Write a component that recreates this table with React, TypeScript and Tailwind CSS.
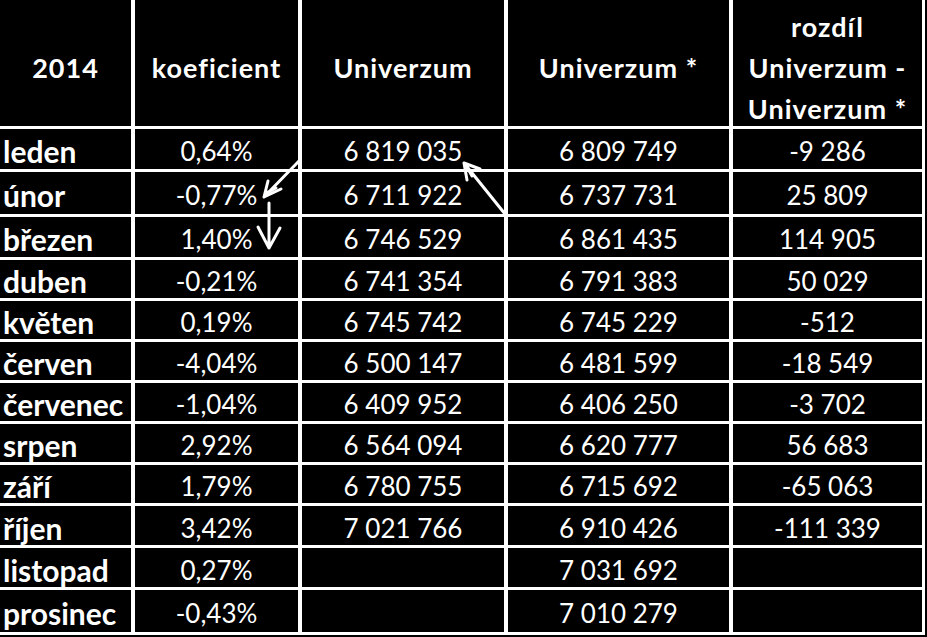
import React from "react"

type Row = [string, string, string, string, string]

const rows: Row[] = [
  ["leden", "0,64%", "6 819 035", "6 809 749", "-9 286"],
  ["únor", "-0,77%", "6 711 922", "6 737 731", "25 809"],
  ["březen", "1,40%", "6 746 529", "6 861 435", "114 905"],
  ["duben", "-0,21%", "6 741 354", "6 791 383", "50 029"],
  ["květen", "0,19%", "6 745 742", "6 745 229", "-512"],
  ["červen", "-4,04%", "6 500 147", "6 481 599", "-18 549"],
  ["červenec", "-1,04%", "6 409 952", "6 406 250", "-3 702"],
  ["srpen", "2,92%", "6 564 094", "6 620 777", "56 683"],
  ["září", "1,79%", "6 780 755", "6 715 692", "-65 063"],
  ["říjen", "3,42%", "7 021 766", "6 910 426", "-111 339"],
  ["listopad", "0,27%", "", "7 031 692", ""],
  ["prosinec", "-0,43%", "", "7 010 279", ""],
]

const cell = "bg-black flex items-center justify-center pt-[4px]"
const head = "bg-black flex items-center justify-center pt-[8px] font-bold text-[27px] tracking-[1px]"

export default function App() {
  return (
    <div
      className="relative w-[927px] h-[637px] bg-black text-white overflow-hidden"
      style={{ fontFamily: "Lato, 'Open Sans', sans-serif", fontVariantLigatures: "none" }}
    >
      <div className="w-[925px] h-[635px] bg-white pr-[3px] pb-[3px] grid grid-cols-[131px_163px_202px_221px_189px] grid-rows-[126px_40px_42px_40px_38px_38px_38px_38px_38px_38px_39px_39px_42px] gap-x-[4px] gap-y-[3px] text-[26px] leading-none">
        {/* header */}
        <div className={head}>2014</div>
        <div className={head}>koeficient</div>
        <div className={head}>Univerzum</div>
        <div className={head}>Univerzum *</div>
        <div className={`${head} flex-col leading-[41px] text-center`}>
          <span>rozdíl</span>
          <span>Univerzum -</span>
          <span>Univerzum *</span>
        </div>

        {rows.map((r) => (
          <React.Fragment key={r[0]}>
            <div className="bg-black flex items-center pt-[4px] pl-[3px] font-bold text-[30px]">{r[0]}</div>
            <div className={cell}>{r[1]}</div>
            <div className={cell}>{r[2]}</div>
            <div className={cell}>{r[3]}</div>
            <div className={cell}>{r[4]}</div>
          </React.Fragment>
        ))}
      </div>

      {/* hand-drawn arrows */}
      <svg
        className="absolute inset-0 pointer-events-none"
        width="927"
        height="637"
        viewBox="0 0 927 637"
        fill="none"
        stroke="white"
        strokeWidth="3"
        strokeLinecap="round"
        strokeLinejoin="round"
      >
        <path d="M299 161 L264 197 M264 197 L281 189 M264 197 L268 181 M266 193 L276 188" />
        <path d="M269 203 L269 248 M269 248 L258 227 M269 248 L280 228" />
        <path d="M505 214 L464 163 M464 163 L467 180 M464 163 L480 169 M467 167 L472 176" />
      </svg>
    </div>
  )
}
